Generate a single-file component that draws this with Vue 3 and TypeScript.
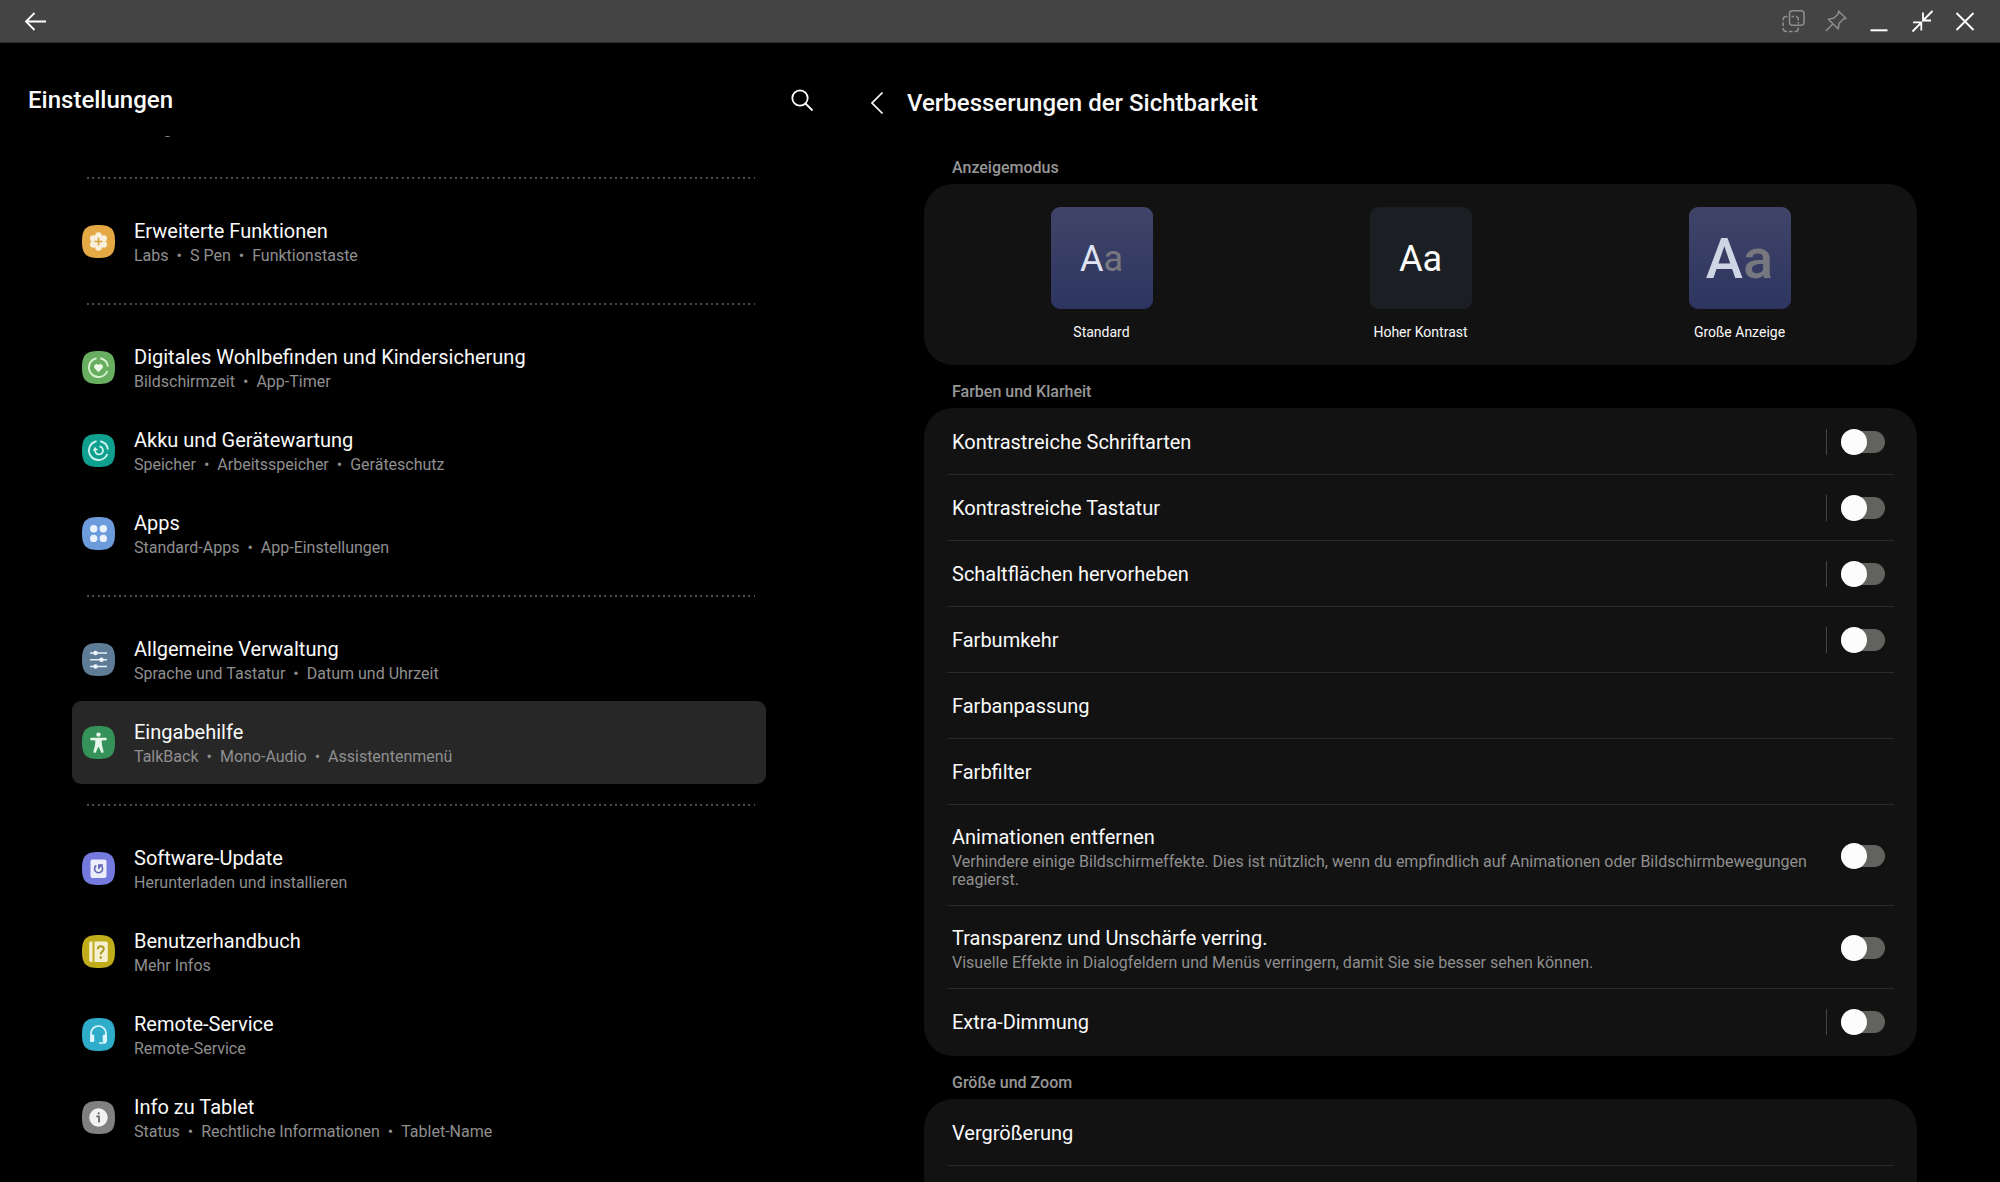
<script setup lang="ts">
import { reactive, ref } from 'vue'

interface MenuItem {
  id: string
  title: string
  details: string[]
  color: string
}

interface SettingRow {
  id: string
  title: string
  note?: string
  toggle?: boolean
  split?: boolean
}

const menuGroups: MenuItem[][] = [
  [{ id: 'advanced', title: 'Erweiterte Funktionen', details: ['Labs', 'S Pen', 'Funktionstaste'], color: '#e4a944' }],
  [
    { id: 'wellbeing', title: 'Digitales Wohlbefinden und Kindersicherung', details: ['Bildschirmzeit', 'App-Timer'], color: '#68ae60' },
    { id: 'care', title: 'Akku und Gerätewartung', details: ['Speicher', 'Arbeitsspeicher', 'Geräteschutz'], color: '#10a090' },
    { id: 'apps', title: 'Apps', details: ['Standard-Apps', 'App-Einstellungen'], color: '#6c9cdc' },
  ],
  [
    { id: 'general', title: 'Allgemeine Verwaltung', details: ['Sprache und Tastatur', 'Datum und Uhrzeit'], color: '#5f7c97' },
    { id: 'accessibility', title: 'Eingabehilfe', details: ['TalkBack', 'Mono-Audio', 'Assistentenmenü'], color: '#35935a' },
  ],
  [
    { id: 'update', title: 'Software-Update', details: ['Herunterladen und installieren'], color: '#7479de' },
    { id: 'manual', title: 'Benutzerhandbuch', details: ['Mehr Infos'], color: '#bfad1c' },
    { id: 'remote', title: 'Remote-Service', details: ['Remote-Service'], color: '#2eacca' },
    { id: 'about', title: 'Info zu Tablet', details: ['Status', 'Rechtliche Informationen', 'Tablet-Name'], color: '#808080' },
  ],
]

const displayModes = [
  { id: 'standard', label: 'Standard' },
  { id: 'contrast', label: 'Hoher Kontrast' },
  { id: 'large', label: 'Große Anzeige' },
]

const colorRows: SettingRow[] = [
  { id: 'fonts', title: 'Kontrastreiche Schriftarten', toggle: true, split: true },
  { id: 'keyboard', title: 'Kontrastreiche Tastatur', toggle: true, split: true },
  { id: 'buttons', title: 'Schaltflächen hervorheben', toggle: true, split: true },
  { id: 'invert', title: 'Farbumkehr', toggle: true, split: true },
  { id: 'adjust', title: 'Farbanpassung' },
  { id: 'filter', title: 'Farbfilter' },
  {
    id: 'animations',
    title: 'Animationen entfernen',
    note: 'Verhindere einige Bildschirmeffekte. Dies ist nützlich, wenn du empfindlich auf Animationen oder Bildschirmbewegungen reagierst.',
    toggle: true,
  },
  {
    id: 'transparency',
    title: 'Transparenz und Unschärfe verring.',
    note: 'Visuelle Effekte in Dialogfeldern und Menüs verringern, damit Sie sie besser sehen können.',
    toggle: true,
  },
  { id: 'dim', title: 'Extra-Dimmung', toggle: true, split: true },
]

const selected = ref('accessibility')
const enabled = reactive<Record<string, boolean>>({})
</script>

<template>
  <div class="window">
    <header class="titlebar">
      <button type="button" class="icon-button" aria-label="Zurück">
        <svg viewBox="0 0 24 24" fill="none" stroke="#fff" stroke-width="1.8">
          <path d="M23 12.500H3.500M11.500 4L3 12.500L11.500 21" />
        </svg>
      </button>
      <div class="window-controls">
        <button type="button" class="icon-button" aria-label="Deckkraft">
          <svg viewBox="0 0 24 24" fill="none" stroke="#8e8e8e" stroke-width="1.500">
            <rect x="8.500" y="1.700" width="14.500" height="14.500" rx="3" />
            <path d="M6.500 7.500H5.200Q2.200 7.500 2.200 10.500V11.500M2.200 13.500V17M2.200 19V19.500Q2.200 22.500 5.200 22.500H6M8 22.500H11.500M13.500 22.500H14.500Q17.300 22.500 17.300 19.500V18.500M10.500 7.500H13M15 7.600Q17.300 8 17.300 10.500V11.500M17.300 13V14.500" />
          </svg>
        </button>
        <button type="button" class="icon-button" aria-label="Anheften">
          <svg viewBox="0 0 24 24" fill="none" stroke="#8e8e8e" stroke-width="1.500" stroke-linejoin="round">
            <path d="M2 22L8.500 15.300M14.500 2L22 9.500L19.500 9.800L15 14.500L14.300 20L4.300 10.200L9.700 9.300L14.400 4.800Z" />
          </svg>
        </button>
        <button type="button" class="icon-button" aria-label="Minimieren">
          <svg viewBox="0 0 24 24" fill="none" stroke="#fff" stroke-width="2">
            <path d="M3.500 21.300H20.500" />
          </svg>
        </button>
        <button type="button" class="icon-button" aria-label="Verkleinern">
          <svg viewBox="0 0 24 24" fill="none" stroke="#fff" stroke-width="1.800">
            <path d="M22.500 2L13.500 11M13 3.500V11.500H21M2.500 22.500L11 13.800M3 13.300H11.300V21.500" />
          </svg>
        </button>
        <button type="button" class="icon-button" aria-label="Schließen">
          <svg viewBox="0 0 24 24" fill="none" stroke="#fff" stroke-width="1.800">
            <path d="M3.500 4L20.500 21M20.500 4L3.500 21" />
          </svg>
        </button>
      </div>
    </header>

    <div class="panes">
      <aside class="sidebar">
        <div class="sidebar-head">
          <h1>Einstellungen</h1>
          <button type="button" class="icon-button" aria-label="Suchen">
            <svg viewBox="0 0 24 24" fill="none" stroke="#fff" stroke-width="1.800">
              <circle cx="10" cy="10" r="7.700" />
              <path d="M15.500 15.500L22.500 22.500" />
            </svg>
          </button>
        </div>
        <nav class="menu">
          <p class="note scrolled">Google-Dienste</p>
          <ul v-for="(group, index) in menuGroups" :key="index" class="menu-group">
            <li v-for="item in group" :key="item.id">
              <a
                href="#"
                class="menu-item"
                :class="{ active: item.id === selected }"
                :aria-current="item.id === selected ? 'page' : undefined"
                @click.prevent="selected = item.id"
              >
                <svg class="menu-icon" viewBox="0 0 33 33" fill="none" aria-hidden="true">
                  <path :fill="item.color" d="M16.500 0C29 0 33 4 33 16.500S29 33 16.500 33 0 29 0 16.500 4 0 16.500 0z" />
                  <g v-if="item.id === 'advanced'">
                    <g fill="#f8efdc">
                      <circle cx="16.500" cy="16.500" r="6" />
                      <circle cx="16.500" cy="10.500" r="3.300" />
                      <circle cx="21.700" cy="13.500" r="3.300" />
                      <circle cx="21.700" cy="19.500" r="3.300" />
                      <circle cx="16.500" cy="22.500" r="3.300" />
                      <circle cx="11.300" cy="19.500" r="3.300" />
                      <circle cx="11.300" cy="13.500" r="3.300" />
                    </g>
                    <path d="M16.500 12.500V20.500M12.500 16.500H20.500" stroke="#d9a03e" stroke-width="1.500" />
                  </g>
                  <g v-else-if="item.id === 'wellbeing'">
                    <path d="M18.300 7.200A9.500 9.500 0 0 1 25.900 15.500M25.300 20A9.500 9.500 0 1 1 14.500 7.200" stroke="#d6f2cf" stroke-width="1.900" />
                    <path d="M16.500 21.300L12.600 17.200A2.500 2.500 0 0 1 16.500 14A2.500 2.500 0 0 1 20.400 17.200Z" fill="#eafae5" />
                  </g>
                  <g v-else-if="item.id === 'care'">
                    <path d="M18.300 7.200A9.500 9.500 0 0 1 25.900 15.500M25.300 20A9.500 9.500 0 1 1 14.500 7.200" stroke="#c9f3ec" stroke-width="1.900" />
                    <path d="M17.500 12.500A4 4 0 1 1 13 16.300" stroke="#d5f6f0" stroke-width="1.800" />
                    <path d="M10.700 16.700L13 12.700L16 16.200Z" fill="#d5f6f0" />
                  </g>
                  <g v-else-if="item.id === 'apps'" fill="#e9f2fd">
                    <circle cx="11.700" cy="11.800" r="3.700" />
                    <circle cx="21.300" cy="11.800" r="3.700" />
                    <circle cx="11.700" cy="21.400" r="3.700" />
                    <circle cx="21.300" cy="21.400" r="3.700" />
                  </g>
                  <g v-else-if="item.id === 'general'">
                    <path d="M8 10H25M8 16.800H25M8 23.500H25" stroke="#e4eef7" stroke-width="1.600" />
                    <g fill="#f1f7fc">
                      <circle cx="13.500" cy="10" r="2.200" />
                      <circle cx="19.500" cy="16.800" r="2.200" />
                      <circle cx="13.500" cy="23.500" r="2.200" />
                    </g>
                  </g>
                  <g v-else-if="item.id === 'accessibility'" fill="#e6f7ea">
                    <circle cx="16.500" cy="8.600" r="2.200" />
                    <path d="M8.700 11.800H24.300Q25.300 13 24.300 14.200L19.600 14.600L20 19L21.700 26.200Q20.600 27.200 19.200 26.600L16.500 20.500L13.800 26.600Q12.400 27.200 11.300 26.200L13 19L13.400 14.600L8.700 14.200Q7.700 13 8.700 11.800Z" />
                  </g>
                  <g v-else-if="item.id === 'update'">
                    <rect x="8.500" y="7.500" width="16" height="18.500" rx="2" fill="#eceefc" />
                    <path d="M14.300 13.500A4 4 0 1 0 19.700 14.300" stroke="#6366b4" stroke-width="1.600" />
                    <path d="M16.800 17.200V13H20.800" stroke="#6366b4" stroke-width="1.400" />
                    <path d="M16.800 13H20.800L17 16.500Z" fill="#6366b4" />
                  </g>
                  <g v-else-if="item.id === 'manual'">
                    <path d="M9 6.500H10.500V27H9Q7.200 27 7.200 25.200V8.300Q7.200 6.500 9 6.500Z" fill="#f5f0cf" />
                    <path d="M12.500 6.500H24Q25.800 6.500 25.800 8.300V25.200Q25.800 27 24 27H12.500Z" fill="#f5f0cf" />
                    <path d="M15.800 14.200Q15.800 11.200 18.800 11.200T21.800 14Q21.800 15.500 20.200 16.600T18.700 19.500" stroke="#aa9a1c" stroke-width="1.900" />
                    <circle cx="18.700" cy="22.500" r="1.200" fill="#aa9a1c" />
                  </g>
                  <g v-else-if="item.id === 'remote'">
                    <path d="M9 18V15.500A7.500 7.500 0 0 1 24 15.500V22.500Q24 25 21.500 25H17" stroke="#dcf6fc" stroke-width="1.700" />
                    <rect x="8" y="16.500" width="4.300" height="7.500" rx="1.500" fill="#dcf6fc" />
                    <rect x="20.700" y="16.500" width="4.300" height="7.500" rx="1.500" fill="#dcf6fc" />
                  </g>
                  <g v-else-if="item.id === 'about'">
                    <circle cx="16.500" cy="16.500" r="9.200" fill="#f2f2f2" />
                    <circle cx="16.700" cy="12.300" r="1.100" fill="#666" />
                    <path d="M14.300 15.300H17V21.500" stroke="#666" stroke-width="1.700" />
                  </g>
                </svg>
                <span class="copy">
                  <span class="title">{{ item.title }}</span>
                  <span class="note">
                    <template v-for="(detail, n) in item.details" :key="detail">
                      <span v-if="n > 0" class="bullet">•</span>
                      <span>{{ detail }}</span>
                    </template>
                  </span>
                </span>
              </a>
            </li>
          </ul>
        </nav>
      </aside>

      <main class="detail">
        <div class="detail-head">
          <button type="button" class="icon-button" aria-label="Nach oben">
            <svg viewBox="0 0 24 24" fill="none" stroke="#fff" stroke-width="1.700">
              <path d="M17.500 1.500L7 12L17.500 22.500" />
            </svg>
          </button>
          <h2>Verbesserungen der Sichtbarkeit</h2>
        </div>

        <h3>Anzeigemodus</h3>
        <section class="card modes">
          <button v-for="mode in displayModes" :key="mode.id" type="button" class="mode">
            <span class="preview" :class="mode.id"><span>A</span><span class="dim">a</span></span>
            <span class="mode-label">{{ mode.label }}</span>
          </button>
        </section>

        <h3>Farben und Klarheit</h3>
        <section class="card">
          <div v-for="row in colorRows" :key="row.id" class="row" :class="{ tall: row.note }">
            <label class="copy" :for="row.toggle ? row.id : undefined">
              <span class="title">{{ row.title }}</span>
              <span v-if="row.note" class="note">{{ row.note }}</span>
            </label>
            <span v-if="row.toggle" class="control" :class="{ split: row.split }">
              <input :id="row.id" v-model="enabled[row.id]" type="checkbox" role="switch" class="switch" />
            </span>
          </div>
        </section>

        <h3>Größe und Zoom</h3>
        <section class="card last">
          <div class="row">
            <span class="copy"><span class="title">Vergrößerung</span></span>
          </div>
        </section>
      </main>
    </div>
  </div>
</template>

<style>
body {
  margin: 0;
  background: #000;
}
</style>

<style scoped>
.window {
  display: flex;
  flex-direction: column;
  height: 100vh;
  overflow: hidden;
  background: #000;
  color: #fafafa;
  font-family: Roboto, "Noto Sans", sans-serif;
}

h1,
h2,
h3,
p,
ul {
  margin: 0;
  padding: 0;
}

button {
  padding: 0;
  border: 0;
  background: none;
  color: inherit;
  font: inherit;
  cursor: pointer;
}

.titlebar {
  display: flex;
  flex: none;
  align-items: center;
  justify-content: space-between;
  box-sizing: border-box;
  height: 43px;
  padding: 0 23px;
  border-bottom: 1px solid #2e2e2e;
  background: #444;
}

.window-controls {
  display: flex;
  gap: 19px;
}

.icon-button {
  flex: none;
  width: 24px;
  height: 24px;
}

.icon-button svg {
  display: block;
  width: 24px;
  height: 24px;
}

.panes {
  display: flex;
  flex: 1;
  min-height: 0;
}

.sidebar {
  display: flex;
  flex-direction: column;
  width: 42%;
}

.sidebar-head {
  display: flex;
  flex: none;
  align-items: center;
  justify-content: space-between;
  box-sizing: border-box;
  height: 93px;
  padding: 20px 26px 0 28px;
}

h1,
h2 {
  font-size: 24px;
  font-weight: 500;
  line-height: 30px;
}

.menu {
  flex: 1;
  min-height: 0;
  padding: 0 74px 0 72px;
  overflow: hidden;
}

.menu-group {
  list-style: none;
}

.menu-group::before {
  content: "";
  display: block;
  height: 2px;
  margin: 20px 11px 21px 15px;
  background: repeating-linear-gradient(90deg, #4a4a4a 0 2px, transparent 2px 16px),
    repeating-linear-gradient(90deg, transparent 0 5px, #4a4a4a 5px 7px, transparent 7px 16px),
    repeating-linear-gradient(90deg, transparent 0 11px, #4a4a4a 11px 13px, transparent 13px 16px);
}

.menu-item {
  display: flex;
  align-items: center;
  gap: 19px;
  box-sizing: border-box;
  height: 83px;
  padding: 0 10px;
  border-radius: 9px;
  color: inherit;
  text-decoration: none;
}

.menu-item.active {
  background: #272727;
}

.menu-icon {
  flex: none;
  width: 33px;
  height: 33px;
}

.copy {
  flex: 1;
  min-width: 0;
}

.title,
.note {
  display: block;
}

.title {
  font-size: 20px;
  line-height: 24px;
}

.note {
  margin-top: 4px;
  color: #8f8f8f;
  font-size: 16px;
  line-height: 18px;
}

/* The list is scrolled, so its first entry has all but left the view. */
.note.scrolled {
  margin: -16px 0 0 62px;
  padding-bottom: 19px;
}

.bullet {
  margin: 0 8px;
}

.detail {
  display: flex;
  flex: 1;
  flex-direction: column;
  min-width: 0;
  padding: 0 83px 0 84px;
}

.detail-head {
  display: flex;
  flex: none;
  align-items: center;
  gap: 18px;
  box-sizing: border-box;
  height: 98px;
  margin-left: -59px;
  padding-top: 22px;
}

h3 {
  flex: none;
  padding: 18px 28px 7px;
  color: #979797;
  font-size: 16px;
  font-weight: 500;
  line-height: 18px;
}

.card {
  flex: none;
  padding: 1px 23px;
  border-radius: 29px;
  background: #121212;
}

.card.last {
  flex: 1 0 auto;
  border-radius: 29px 29px 0 0;
}

.card.modes {
  display: flex;
  padding: 23px 18px 18px;
}

.mode {
  display: flex;
  flex: 1;
  flex-direction: column;
  align-items: center;
  gap: 14px;
  height: 140px;
}

.preview {
  display: flex;
  align-items: center;
  justify-content: center;
  box-sizing: border-box;
  width: 102px;
  height: 102px;
  padding-top: 2px;
  border-radius: 9px;
  background: linear-gradient(#404468, #2d3560);
  color: #dfe3f3;
  font-size: 36px;
}

.preview .dim {
  color: #76777f;
}

.preview.contrast {
  background: #1b1f23;
  color: #fff;
}

.preview.contrast .dim {
  color: #fff;
}

.preview.large {
  color: #ced5e4;
  font-size: 56px;
  font-weight: 500;
}

.mode-label {
  font-size: 14px;
  line-height: 18px;
}

.row {
  display: flex;
  align-items: center;
  box-sizing: border-box;
  min-height: 66px;
  padding: 0 9px 0 5px;
  border-bottom: 1px solid #2a2a2a;
}

.row.tall {
  padding-top: 17px;
  padding-bottom: 16px;
}

.row.tall .copy {
  padding-top: 3px;
}

.card:not(.last) .row:last-child {
  border-bottom-color: transparent;
}

.control {
  display: flex;
  align-items: center;
  height: 26px;
  padding-left: 14px;
  margin-left: 16px;
}

.control.split {
  border-left: 1px solid #444;
}

.switch {
  display: flex;
  align-items: center;
  appearance: none;
  width: 44px;
  height: 22px;
  margin: 0;
  border-radius: 11px;
  background: #62625e;
  cursor: pointer;
}

.switch::before {
  content: "";
  flex: none;
  width: 26px;
  height: 26px;
  border-radius: 50%;
  background: #fcfcfc;
}

.switch:checked {
  justify-content: flex-end;
  background: #3e7bfa;
}
</style>
